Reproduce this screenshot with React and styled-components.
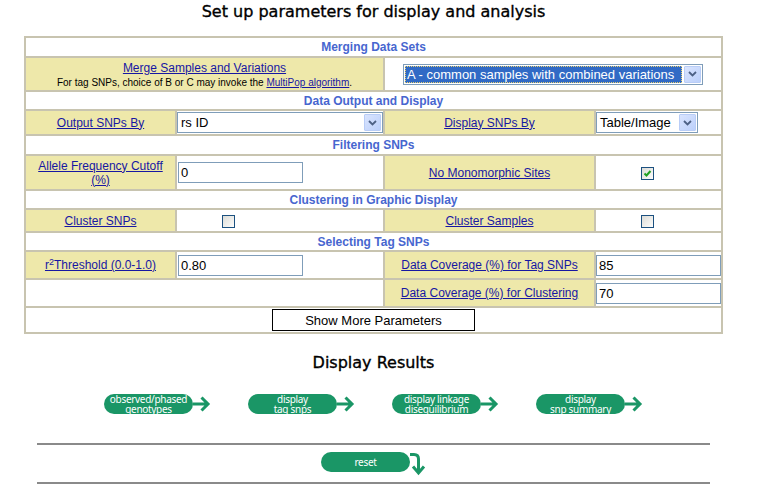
import React from "react";
import styled, { createGlobalStyle } from "styled-components";

const GREEN = "#1a9666";
const BEIGE = "#eee8aa";
const LINE = "#c8c4b0";

const GlobalStyle = createGlobalStyle`
  html, body { margin: 0; padding: 0; background: #fff; }
  body { font-family: "Liberation Sans", Arial, sans-serif; }
`;

const Page = styled.div`
  width: 747px;
  display: flex;
  flex-direction: column;
  align-items: center;
`;

const Title = styled.h1`
  margin: 2px 0 0 0;
  font-family: "DejaVu Sans", Verdana, sans-serif;
  font-size: 16px;
  font-weight: normal;
  line-height: 19px;
  color: #000;
  -webkit-text-stroke: 0.35px #000;
`;

const Table = styled.table`
  margin-top: 15px;
  width: 699px;
  table-layout: fixed;
  border-collapse: separate;
  border-spacing: 0;
  border: 1px solid ${LINE};
`;

const Cell = styled.td`
  box-sizing: border-box;
  border: 1px solid ${LINE};
  padding: 0;
  height: ${(p) => p.$h || 22}px;
  background: ${(p) => (p.$beige ? BEIGE : "#fff")};
  text-align: ${(p) => p.$align || "center"};
  vertical-align: middle;
  font-size: 12px;
  padding-left: ${(p) => p.$pl || 0}px;
  padding-top: ${(p) => p.$pt || 0}px;
`;

const SectionCell = styled(Cell)`
  font-weight: bold;
  color: #4766cf;
  font-size: 12px;
  line-height: 14px;
`;

const Link = styled.a`
  color: #1717a3;
  text-decoration: underline;
  font-size: ${(p) => p.$size || 12}px;
  line-height: 14px;
  cursor: pointer;
`;

const Sup = styled.sup`
  font-size: 9px;
  vertical-align: top;
  position: relative;
  top: -3px;
`;

const Note = styled.div`
  font-size: 10px;
  line-height: 12px;
  margin-top: 1px;
  color: #000;
`;

const SelectBox = styled.div`
  box-sizing: border-box;
  display: ${(p) => (p.$inline ? "inline-flex" : "flex")};
  align-items: center;
  width: ${(p) => p.$w}px;
  height: 21px;
  border: 1px solid #7f9db9;
  background: #fff;
  padding: 1px;
  font-size: 13px;
  vertical-align: middle;
`;

const SelectText = styled.span`
  flex: 1;
  height: 17px;
  line-height: 17px;
  padding-left: 2px;
  text-align: left;
  white-space: nowrap;
  overflow: hidden;
  color: ${(p) => (p.$selected ? "#fff" : "#000")};
  background: ${(p) => (p.$selected ? "#316ac5" : "transparent")};
  outline: ${(p) => (p.$selected ? "1px dotted #e8d070" : "none")};
  outline-offset: -1px;
  margin-right: 2px;
`;

const ArrowBtn = styled.span`
  box-sizing: border-box;
  width: 17px;
  height: 17px;
  border: 1px solid #b9cdf7;
  border-radius: 1px;
  background: linear-gradient(135deg, #d9e4fe 0%, #bcd0fb 100%);
  display: flex;
  align-items: center;
  justify-content: center;
`;

const TextInput = styled.div`
  box-sizing: border-box;
  width: 125px;
  height: 21px;
  border: 1px solid #7f9db9;
  background: #fff;
  font-size: 13px;
  line-height: 19px;
  padding-left: 2px;
  text-align: left;
  margin-left: ${(p) => (p.$flush ? 0 : 1)}px;
`;

const Check = styled.span`
  box-sizing: border-box;
  display: inline-flex;
  align-items: center;
  justify-content: center;
  width: 13px;
  height: 13px;
  border: 1px solid #1c5180;
  background: linear-gradient(135deg, #dcdcd7 0%, #f6f6f4 80%, #fff 100%);
  vertical-align: middle;
`;

const MoreButton = styled.button`
  box-sizing: border-box;
  width: 203px;
  height: 22px;
  border: 1px solid #000;
  background: #fff;
  font-family: "Liberation Sans", Arial, sans-serif;
  font-size: 13px;
  color: #000;
  padding: 0;
`;

const SubTitle = styled.h2`
  margin: 19px 0 0 0;
  font-family: "DejaVu Sans", Verdana, sans-serif;
  font-size: 16px;
  font-weight: normal;
  line-height: 19px;
  -webkit-text-stroke: 0.35px #000;
`;

const ActionRow = styled.div`
  display: grid;
  grid-template-columns: repeat(4, 144px);
  margin-top: 22px;
  height: 20px;
`;

const Action = styled.div`
  display: flex;
  align-items: center;
  justify-content: center;
`;

const Pill = styled.div`
  box-sizing: border-box;
  width: 89px;
  height: 20px;
  border-radius: 10px;
  background: ${GREEN};
  color: #fff;
  font-family: "Noto Sans", "Open Sans", sans-serif;
  font-size: 10px;
  line-height: 10px;
  letter-spacing: -0.3px;
  text-align: center;
  white-space: pre-line;
  display: flex;
  flex-direction: column;
  justify-content: center;
`;

const Rule = styled.div`
  width: 673px;
  height: 2px;
  background: #8a8a8a;
  margin-top: ${(p) => p.$mt}px;
`;

const ResetRow = styled.div`
  display: flex;
  align-items: flex-start;
  margin-top: 7px;
  height: 28px;
  padding-left: 4px;
`;

const Chevron = () => (
  <svg width="9" height="6" viewBox="0 0 9 6">
    <path d="M1 1 L4.5 4.5 L8 1" stroke="#4d6185" strokeWidth="1.8" fill="none" />
  </svg>
);

const Select = ({ w, text, selected, inline }) => (
  <SelectBox $w={w} $inline={inline}>
    <SelectText $selected={selected}>{text}</SelectText>
    <ArrowBtn>
      <Chevron />
    </ArrowBtn>
  </SelectBox>
);

const Checkbox = ({ checked }) => (
  <Check>
    {checked && (
      <svg width="9" height="9" viewBox="0 0 9 9">
        <path d="M1.5 4.5 L3.5 6.5 L7.5 2" stroke="#21a121" strokeWidth="2" fill="none" />
      </svg>
    )}
  </Check>
);

const Arrow = () => (
  <svg width="18" height="18" viewBox="0 0 18 18">
    <path d="M0 9 H15 M8.5 2.5 L15 9 L8.5 15.5" stroke={GREEN} strokeWidth="3" fill="none" />
  </svg>
);

const CurlArrow = () => (
  <svg width="20" height="26" viewBox="0 0 20 26">
    <path d="M0 2.5 H4 Q8.5 2.5 8.5 7 V20" stroke={GREEN} strokeWidth="3" fill="none" />
    <path d="M3 14.5 L8.5 21 L14 14.5" stroke={GREEN} strokeWidth="3" fill="none" />
  </svg>
);

const actions = [
  "observed/phased\ngenotypes",
  "display\ntag snps",
  "display linkage\ndisequilibrium",
  "display\nsnp summary",
];

export default function App() {
  return (
    <Page>
      <GlobalStyle />
      <Title>Set up parameters for display and analysis</Title>
      <Table>
        <colgroup>
          <col style={{ width: 151 }} />
          <col style={{ width: 208 }} />
          <col style={{ width: 211 }} />
          <col style={{ width: 127 }} />
        </colgroup>
        <tbody>
          <tr>
            <SectionCell colSpan={4} $h={20}>Merging Data Sets</SectionCell>
          </tr>
          <tr>
            <Cell colSpan={2} $beige $h={34} $pt={2}>
              <Link>Merge Samples and Variations</Link>
              <Note>
                For tag SNPs, choice of B or C may invoke the <Link $size={10}>MultiPop algorithm</Link>.
              </Note>
            </Cell>
            <Cell colSpan={2} $h={34}>
              <Select inline w={300} text="A - common samples with combined variations" selected />
            </Cell>
          </tr>
          <tr>
            <SectionCell colSpan={4} $h={19}>Data Output and Display</SectionCell>
          </tr>
          <tr>
            <Cell $beige $h={25}><Link>Output SNPs By</Link></Cell>
            <Cell $h={25}><Select w={206} text="rs ID" /></Cell>
            <Cell $beige $h={25}><Link>Display SNPs By</Link></Cell>
            <Cell $h={25} $align="left"><Select w={102} text="Table/Image" /></Cell>
          </tr>
          <tr>
            <SectionCell colSpan={4} $h={20}>Filtering SNPs</SectionCell>
          </tr>
          <tr>
            <Cell $beige $h={35}><Link>Allele Frequency Cutoff<br />(%)</Link></Cell>
            <Cell $h={35}><TextInput>0</TextInput></Cell>
            <Cell $beige $h={35}><Link>No Monomorphic Sites</Link></Cell>
            <Cell $h={35} $align="left" $pl={45}><Checkbox checked /></Cell>
          </tr>
          <tr>
            <SectionCell colSpan={4} $h={19}>Clustering in Graphic Display</SectionCell>
          </tr>
          <tr>
            <Cell $beige $h={23}><Link>Cluster SNPs</Link></Cell>
            <Cell $h={23} $align="left" $pl={45}><Checkbox /></Cell>
            <Cell $beige $h={23}><Link>Cluster Samples</Link></Cell>
            <Cell $h={23} $align="left" $pl={45}><Checkbox /></Cell>
          </tr>
          <tr>
            <SectionCell colSpan={4} $h={19}>Selecting Tag SNPs</SectionCell>
          </tr>
          <tr>
            <Cell $beige $h={28}><Link>r<Sup>2</Sup>Threshold (0.0-1.0)</Link></Cell>
            <Cell $h={28}><TextInput>0.80</TextInput></Cell>
            <Cell $beige $h={28}><Link>Data Coverage (%) for Tag SNPs</Link></Cell>
            <Cell $h={28}><TextInput $flush>85</TextInput></Cell>
          </tr>
          <tr>
            <Cell colSpan={2} $h={28} />
            <Cell $beige $h={28}><Link>Data Coverage (%) for Clustering</Link></Cell>
            <Cell $h={28}><TextInput $flush>70</TextInput></Cell>
          </tr>
          <tr>
            <Cell colSpan={4} $h={26}>
              <MoreButton>Show More Parameters</MoreButton>
            </Cell>
          </tr>
        </tbody>
      </Table>
      <SubTitle>Display Results</SubTitle>
      <ActionRow>
        {actions.map((label) => (
          <Action key={label}>
            <Pill>{label}</Pill>
            <Arrow />
          </Action>
        ))}
      </ActionRow>
      <Rule $mt={29} />
      <ResetRow>
        <Pill>reset</Pill>
        <CurlArrow />
      </ResetRow>
      <Rule $mt={2} />
    </Page>
  );
}
